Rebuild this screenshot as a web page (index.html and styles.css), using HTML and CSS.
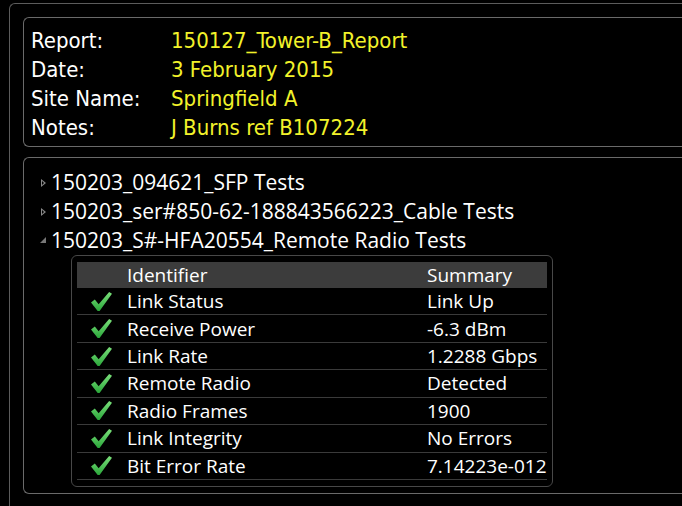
FILE: index.html
```html
<!DOCTYPE html>
<html>
<head>
<meta charset="utf-8">
<link rel="stylesheet" href="styles.css">
</head>
<body>
<div class="frame">
  <div class="info">
    <div class="info-row"><span class="label">Report:</span><span class="value">150127_Tower-B_Report</span></div>
    <div class="info-row"><span class="label">Date:</span><span class="value">3 February 2015</span></div>
    <div class="info-row"><span class="label">Site Name:</span><span class="value">Springfield A</span></div>
    <div class="info-row"><span class="label">Notes:</span><span class="value">J Burns ref B107224</span></div>
  </div>
  <div class="tree">
    <div class="node"><span class="tri closed"></span><span>150203_094621_SFP Tests</span></div>
    <div class="node"><span class="tri closed"></span><span>150203_ser#850-62-188843566223_Cable Tests</span></div>
    <div class="node"><span class="tri open"></span><span>150203_S#-HFA20554_Remote Radio Tests</span></div>
    <div class="table">
      <div class="trow thead"><span class="c-icon"></span><span class="c-id">Identifier</span><span class="c-sum">Summary</span></div>
      <div class="trow"><span class="c-icon"><svg class="check" viewBox="0 0 24 22"><defs><linearGradient id="g" x1="0" y1="0" x2="0" y2="1"><stop offset="0" stop-color="#7be07b"/><stop offset="1" stop-color="#2aa63a"/></linearGradient></defs><path d="M1 12 L5 9 L9 14 L20 1 L23 3 L10 21 L8 21 Z" fill="url(#g)"/></svg></span><span class="c-id">Link Status</span><span class="c-sum">Link Up</span></div>
      <div class="trow"><span class="c-icon"><svg class="check" viewBox="0 0 24 22"><path d="M1 12 L5 9 L9 14 L20 1 L23 3 L10 21 L8 21 Z" fill="url(#g)"/></svg></span><span class="c-id">Receive Power</span><span class="c-sum">-6.3 dBm</span></div>
      <div class="trow"><span class="c-icon"><svg class="check" viewBox="0 0 24 22"><path d="M1 12 L5 9 L9 14 L20 1 L23 3 L10 21 L8 21 Z" fill="url(#g)"/></svg></span><span class="c-id">Link Rate</span><span class="c-sum">1.2288 Gbps</span></div>
      <div class="trow"><span class="c-icon"><svg class="check" viewBox="0 0 24 22"><path d="M1 12 L5 9 L9 14 L20 1 L23 3 L10 21 L8 21 Z" fill="url(#g)"/></svg></span><span class="c-id">Remote Radio</span><span class="c-sum">Detected</span></div>
      <div class="trow"><span class="c-icon"><svg class="check" viewBox="0 0 24 22"><path d="M1 12 L5 9 L9 14 L20 1 L23 3 L10 21 L8 21 Z" fill="url(#g)"/></svg></span><span class="c-id">Radio Frames</span><span class="c-sum">1900</span></div>
      <div class="trow"><span class="c-icon"><svg class="check" viewBox="0 0 24 22"><path d="M1 12 L5 9 L9 14 L20 1 L23 3 L10 21 L8 21 Z" fill="url(#g)"/></svg></span><span class="c-id">Link Integrity</span><span class="c-sum">No Errors</span></div>
      <div class="trow"><span class="c-icon"><svg class="check" viewBox="0 0 24 22"><path d="M1 12 L5 9 L9 14 L20 1 L23 3 L10 21 L8 21 Z" fill="url(#g)"/></svg></span><span class="c-id">Bit Error Rate</span><span class="c-sum">7.14223e-012</span></div>
    </div>
  </div>
</div>
</body>
</html>
```
FILE: styles.css
```css
html, body {
  margin: 0;
  padding: 0;
  background: #000;
  overflow: hidden;
  height: 506px;
}
body {
  color: #fff;
  font-family: "Open Sans", sans-serif;
}
.frame {
  margin: 3px 0 0 9px;
  border: 1px solid #5c5c5c;
  border-right: none;
  border-bottom: none;
  border-radius: 6px 0 0 0;
  padding: 13px 0 0 13px;
  height: 489px;
}
.info {
  border: 1px solid #6a6a6a;
  border-right: none;
  border-radius: 6px 0 0 6px;
  height: 120px;
  padding: 8px 0 0 7px;
  font-family: "DejaVu Sans Condensed", "Liberation Sans", sans-serif;
  font-size: 22px;
}
.info-row {
  display: flex;
  height: 29px;
  line-height: 29px;
}
.label {
  width: 140px;
  color: #fff;
}
.value {
  color: #f2f22a;
}
.tree {
  margin-top: 10px;
  border: 1px solid #6a6a6a;
  border-right: none;
  border-radius: 6px 0 0 6px;
  height: 325px;
  padding: 10px 0 0 15px;
  font-size: 21px;
}
.node {
  display: flex;
  align-items: center;
  height: 29px;
  line-height: 29px;
}
.tri {
  width: 12px;
  height: 29px;
  position: relative;
}
.tri.closed::before {
  content: "";
  position: absolute;
  left: 2px;
  top: 11px;
  border-left: 5px solid #888;
  border-top: 4px solid transparent;
  border-bottom: 4px solid transparent;
}
.tri.closed::after {
  content: "";
  position: absolute;
  left: 3px;
  top: 13px;
  border-left: 2px solid #000;
  border-top: 2px solid transparent;
  border-bottom: 2px solid transparent;
}
.tri.open::before {
  content: "";
  position: absolute;
  left: 1px;
  top: 11px;
  border-right: 6px solid #777;
  border-top: 6px solid transparent;
}
.table {
  margin-left: 32px;
  width: 470px;
  border: 1px solid #484848;
  border-radius: 6px;
  padding: 6px 5px 6px 5px;
  font-size: 19px;
}
.trow {
  display: flex;
  align-items: center;
  height: 27.43px;
  box-sizing: border-box;
  border-bottom: 1px solid #3a3a3a;
  line-height: 26px;
}
.trow.thead {
  background: #3c3c3c;
  border-bottom: none;
  height: 26px;
}
.c-icon {
  width: 50px;
  display: flex;
  align-items: center;
  padding-left: 13px;
  box-sizing: border-box;
}
.c-id {
  width: 300px;
}
.check {
  width: 23px;
  height: 21px;
}
```
